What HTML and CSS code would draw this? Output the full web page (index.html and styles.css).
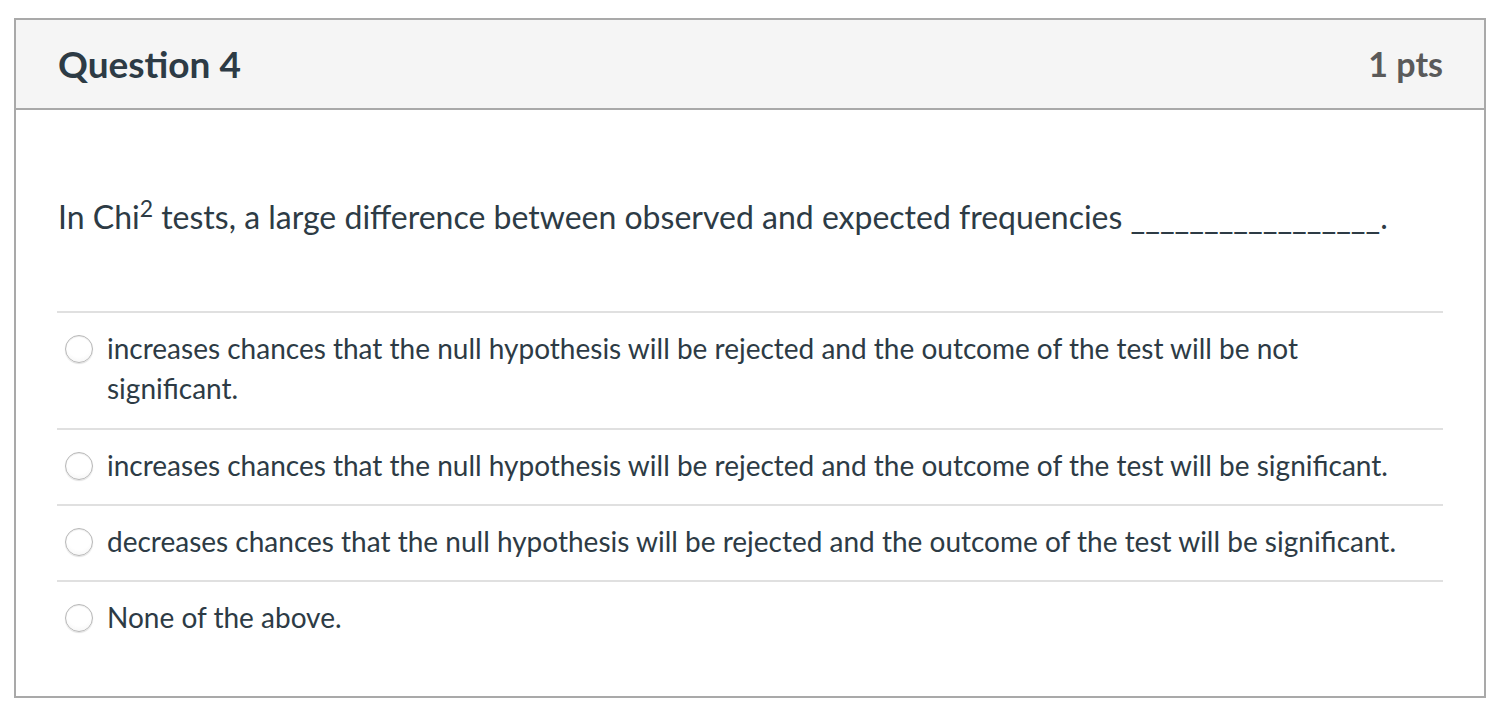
FILE: index.html
```html
<!DOCTYPE html>
<html>
<head>
<meta charset="utf-8">
<link rel="stylesheet" href="styles.css">
</head>
<body>
<div class="card">
  <div class="header">
    <span class="title">Question 4</span>
    <span class="pts">1 pts</span>
  </div>
  <div class="body">
    <p class="question">In Chi<sup>2</sup> tests, a large difference between observed and expected frequencies _________________.</p>
    <div class="answers">
      <div class="answer"><span class="radio"></span><span class="label">increases chances that the null hypothesis will be rejected and the outcome of the test will be not significant.</span></div>
      <div class="answer"><span class="radio"></span><span class="label">increases chances that the null hypothesis will be rejected and the outcome of the test will be significant.</span></div>
      <div class="answer"><span class="radio"></span><span class="label">decreases chances that the null hypothesis will be rejected and the outcome of the test will be significant.</span></div>
      <div class="answer"><span class="radio"></span><span class="label">None of the above.</span></div>
    </div>
  </div>
</div>
</body>
</html>
```
FILE: styles.css
```css
html, body {
  margin: 0;
  padding: 0;
  background: #fff;
}
body {
  font-family: Lato, "Liberation Sans", sans-serif;
  color: #2d3b45;
}
.card {
  margin: 18px 0 0 14px;
  width: 1472px;
  height: 680px;
  box-sizing: border-box;
  border: 2px solid #a9a9a9;
}
.header {
  height: 90px;
  box-sizing: border-box;
  background: #f5f5f5;
  border-bottom: 2px solid #a9a9a9;
  display: flex;
  align-items: center;
  justify-content: space-between;
  padding: 0 41px 2px 42px;
}
.title {
  font-size: 37px;
  font-weight: 700;
  color: #2d3b45;
}
.pts {
  font-size: 34px;
  font-weight: 700;
  color: #5a5a5a;
}
.body {
  padding: 0 41px 0 41px;
}
.question {
  margin: 0;
  padding: 87px 0 0 1px;
  height: 114px;
  font-size: 32px;
  line-height: 40px;
}
.question sup {
  font-size: 23px;
  line-height: 0;
  vertical-align: 12px;
}
.answers {
  border-top: 2px solid #e0e0e0;
}
.answer {
  display: flex;
  align-items: flex-start;
  padding: 15px 0 19px;
  border-bottom: 2px solid #e0e0e0;
  font-size: 28px;
  line-height: 40px;
}
.answer:first-child {
  padding-bottom: 20px;
}
.answer:last-child {
  border-bottom: none;
}
.radio {
  flex: none;
  width: 26px;
  height: 26px;
  margin: 7px 14px 0 8px;
  border-radius: 50%;
  border: 1px solid #b8b8b8;
  background: radial-gradient(circle at 50% 35%, #ffffff 55%, #f0f0f0 100%);
  box-shadow: inset 0 1px 1px rgba(0,0,0,0.08), 0 1px 1px rgba(0,0,0,0.12);
}
.label {
  flex: 1;
  padding-right: 40px;
}
```
